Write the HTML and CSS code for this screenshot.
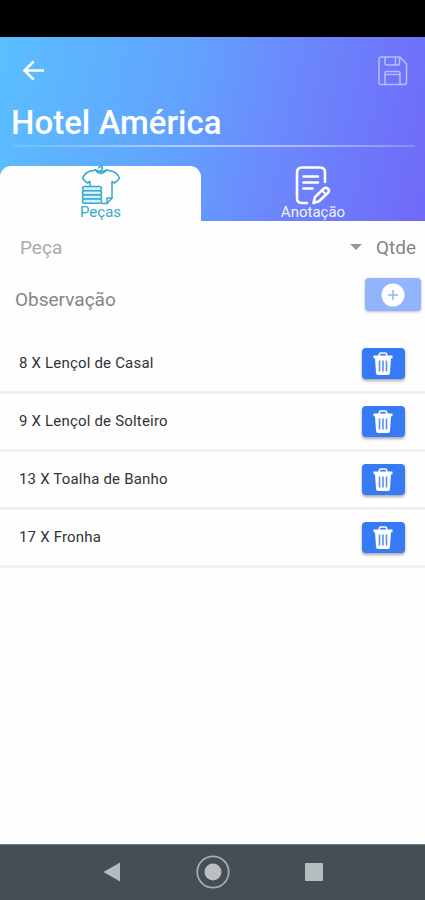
FILE: index.html
```html
<!DOCTYPE html>
<html lang="pt-BR">
<head>
<meta charset="utf-8">
<meta name="viewport" content="width=device-width, initial-scale=1">
<title>Hotel América</title>
<link rel="stylesheet" href="styles.css">
</head>
<body>
<svg width="0" height="0" class="defs">
  <symbol id="trash" viewBox="0 0 20 24">
    <path d="M6.300 4.200V2.500Q6.300 1 7.800 1h4.400q1.500 0 1.500 1.500v1.700" fill="none" stroke="#fff" stroke-width="1.600"/>
    <path d="M.5 3.500h19v2.800H.5z" fill="#fff"/>
    <path d="M2 6h16l-1 15q-.2 2-2 2H5q-1.800 0-2-2z" fill="#fff"/>
    <path d="M6.500 8.500v11M10 8.500v11M13.500 8.500v11" stroke="#5a91f7" stroke-width="1.600"/>
  </symbol>
</svg>
<div class="screen">
  <div class="status"></div>
  <header class="header">
    <div class="toolbar">
      <svg class="back" width="22" height="22" viewBox="0 0 22 22" fill="none" stroke="#fff" stroke-width="2.600"><path d="M22 10.500H3M11.700 1.300 2.500 10.500l9.200 9.200"/></svg>
      <svg class="save" width="30" height="30" viewBox="0 0 30 30" fill="none" stroke="#b9bdff" stroke-width="1.500" stroke-linejoin="round"><path d="M3 1h19l6.500 7v18.500q0 2-2 2H3q-2 0-2-2V3q0-2 2-2zM7 1v6.500q0 1.500 1.500 1.500H20q1.500 0 1.500-1.500V1M17.500 1v8M7 28.500V17q0-1.500 1.500-1.500h12Q22 15.500 22 17v11.500M7 18.500h15"/></svg>
    </div>
    <h1 class="title">Hotel América</h1>
    <div class="rule"></div>
    <nav class="tabs">
      <a class="tab active">
        <svg width="40" height="40" viewBox="0 0 40 40" fill="none" stroke="#35a9cd" stroke-width="1.500" stroke-linejoin="round" stroke-linecap="round">
          <path d="M17.500 3Q18.500 1 20.500 1.500q2 1.300 0 3l-1.500 2.300"/>
          <path d="M9 20.500v-4l-2.500 1.500q-3-1.800-5-5Q4 8 8 6.500L14.500 5q5 7 11 0L32 6.500q4 1.500 6.500 6.500-2 3.200-5 5L31 16.500V33l-5 5.500h-5"/>
          <path d="M14.500 5q5.500 3 11 0M26 38.500V33h5"/>
          <g fill="#d5eff7"><rect x="1.500" y="21.500" width="19" height="4.200" rx="2"/><rect x="1.500" y="25.700" width="19" height="4.200" rx="2"/><rect x="1.500" y="29.900" width="19" height="4.200" rx="2"/><rect x="1.500" y="34.100" width="19" height="4.200" rx="2"/></g>
        </svg>
        <span class="label">Peças</span>
      </a>
      <a class="tab">
        <svg class="note" width="36" height="40" viewBox="0 0 36 40" fill="none" stroke="#fff" stroke-width="2.600" stroke-linecap="round" stroke-linejoin="round">
          <path d="M12 38H7q-5 0-5-5V7.500q0-5 5-5h18q5 0 5 5V17M8.500 11.500h14.500M8.500 17.500h14.500M8.500 23.500h9"/>
          <path d="m18.500 38 1.500-6 9-8.500q2-1.500 4 .2 1.800 2 0 4l-9 8.500z"/><path d="m27 25.500 4 4" stroke-width="1.800"/>
        </svg>
        <span class="label">Anotação</span>
      </a>
    </nav>
  </header>
  <main class="content">
    <div class="field-row">
      <span class="placeholder">Peça</span>
      <span class="caret"></span>
      <span class="qty">Qtde</span>
    </div>
    <div class="obs-row">
      <span class="obs">Observação</span>
      <button class="add"><svg width="24" height="24" viewBox="0 0 24 24"><circle cx="12" cy="12" r="11.500" fill="#fff"/><path d="M12 7v10M7 12h10" stroke="#8fb3fc" stroke-width="1.500"/></svg></button>
    </div>
    <ul class="list">
      <li class="item"><span>8 X Lençol de Casal</span><button class="del"><svg width="20" height="24"><use href="#trash"/></svg></button></li>
      <li class="item"><span>9 X Lençol de Solteiro</span><button class="del"><svg width="20" height="24"><use href="#trash"/></svg></button></li>
      <li class="item"><span>13 X Toalha de Banho</span><button class="del"><svg width="20" height="24"><use href="#trash"/></svg></button></li>
      <li class="item"><span>17 X Fronha</span><button class="del"><svg width="20" height="24"><use href="#trash"/></svg></button></li>
    </ul>
  </main>
  <footer class="navbar">
    <svg width="18" height="20" viewBox="0 0 18 20"><path d="M.5 10 17 .5v19z" fill="#b5bcc0"/></svg>
    <svg width="34" height="34" viewBox="0 0 34 34"><circle cx="17" cy="17" r="15.700" fill="none" stroke="#a5acb0" stroke-width="1.800"/><circle cx="17" cy="17" r="8.500" fill="#b9bfc2"/></svg>
    <svg width="18" height="18" viewBox="0 0 18 18"><rect width="18" height="18" rx="1" fill="#b5bcc0"/></svg>
  </footer>
</div>
</body>
</html>
```
FILE: styles.css
```css
* { box-sizing: border-box; }
body { margin: 0; font-family: Roboto, sans-serif; background: #fefefe; }
.defs { display: none; }
.screen { width: 425px; height: 900px; display: flex; flex-direction: column; overflow: hidden; }
.status { height: 37px; background: #000; flex: none; }
.header { height: 184px; flex: none; display: flex; flex-direction: column; background: linear-gradient(102deg, #5abfff 0%, #62a2fe 42%, #6b88fc 65%, #7069f8 100%); }
.toolbar { height: 66px; flex: none; display: flex; justify-content: space-between; align-items: center; padding: 1px 17px 0 22px; }
.title { margin: 0; padding-left: 11px; height: 41px; line-height: 40px; font-size: 33px; font-weight: 500; color: #fff; white-space: nowrap; }
.rule { height: 2px; flex: none; margin: 1px 10px 19px 12px; background: linear-gradient(90deg, rgba(255,255,255,.1), rgba(255,255,255,.5) 45%, rgba(255,255,255,.45) 70%, rgba(255,255,255,.2)); }
.tabs { display: flex; flex: 1; }
.tab { width: 224px; display: flex; flex-direction: column; align-items: center; color: #f2f1ff; }
.tab.active { width: 201px; background: #fefefe; border-radius: 11px 11px 0 0; color: #35a9cd; }
.tab svg { flex: none; margin-top: -1px; }
.label { font-size: 15px; line-height: 14px; }
.content { flex: 1; }
.field-row { height: 52px; display: flex; align-items: center; padding: 0 9px 0 20px; font-size: 19px; }
.placeholder { flex: 1; color: #aaa; }
.caret { border: 6px solid transparent; border-top-color: #999; border-bottom: 0; margin-right: 14px; }
.qty { color: #858585; }
.obs-row { height: 63px; display: flex; justify-content: space-between; align-items: flex-start; padding: 5px 4px 0 15px; font-size: 19px; color: #858585; }
.obs { line-height: 44px; }
.add, .del { border: 0; padding: 0; display: flex; justify-content: center; align-items: center; border-radius: 4px; }
.add { width: 56px; height: 33px; background: #91b4fc; box-shadow: 0 1px 3px #bbb; }
.list { margin: 0; padding: 0; list-style: none; }
.item { height: 58px; display: flex; align-items: center; justify-content: space-between; padding: 0 20px 0 19px; border-bottom: 3px solid #f0f0f0; font-size: 15px; letter-spacing: .19px; color: #333; }
.item span { padding-bottom: 1px; }
.del { width: 43px; height: 31px; background: #367af6; box-shadow: 0 2px 3px #aaa; }
.del svg { margin-right: 1px; }
.navbar { height: 56px; flex: none; background: #454e54; border-top: 1px solid #747b80; display: flex; align-items: center; justify-content: space-between; padding: 0 102px 1px 103px; }
```
